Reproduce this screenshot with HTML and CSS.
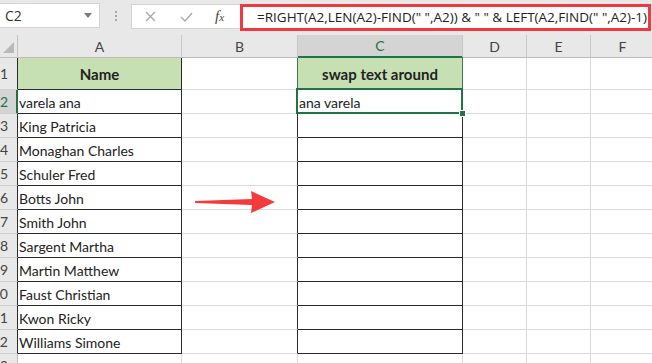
FILE: index.html
```html
<!DOCTYPE html>
<html>
<head>
  <title>Swap text around</title>
  <link rel="stylesheet" href="styles.css">
</head>
<body>
  <div class="toolbar">
    <div class="namebox">
      <span>C2</span>
      <svg class="caret" width="8" height="5" viewBox="0 0 8 5"><path d="M0 0h8L4 5z"/></svg>
    </div>
    <div class="grip"><i></i><i></i><i></i></div>
    <div class="fnbox">
      <svg width="11" height="11" viewBox="0 0 11 11"><path d="M1 1l9 9M10 1l-9 9"/></svg>
      <svg width="13" height="10" viewBox="0 0 13 10"><path d="M1 5l4 4 7-8"/></svg>
      <span class="fx">f<small>x</small></span>
    </div>
    <div class="formula">=RIGHT(A2,LEN(A2)-FIND(" ",A2)) &amp; " " &amp; LEFT(A2,FIND(" ",A2)-1)</div>
  </div>

  <div class="sheet">
    <div class="corner"><svg width="11" height="11" viewBox="0 0 11 11"><path d="M11 0v11H0z"/></svg></div>
    <div class="hd">A</div>
    <div class="hd">B</div>
    <div class="hd on">C</div>
    <div class="hd">D</div>
    <div class="hd">E</div>
    <div class="hd">F</div>

    <div class="rh edge mid">1</div>
    <div class="c box title">Name</div>
    <div class="c green-edge"></div>
    <div class="c box title top">swap text around</div>
    <div class="c"></div><div class="c"></div><div class="c"></div>

    <div class="rh on">2</div>
    <div class="c box">varela ana</div>
    <div class="c edge"></div>
    <div class="c box sel">ana varela</div>
    <div class="c"></div><div class="c"></div><div class="c"></div>

    <div class="rh edge">3</div>
    <div class="c box">King Patricia</div>
    <div class="c edge"></div>
    <div class="c box"></div>
    <div class="c"></div><div class="c"></div><div class="c"></div>

    <div class="rh edge">4</div>
    <div class="c box">Monaghan Charles</div>
    <div class="c edge"></div>
    <div class="c box"></div>
    <div class="c"></div><div class="c"></div><div class="c"></div>

    <div class="rh edge">5</div>
    <div class="c box">Schuler Fred</div>
    <div class="c edge"></div>
    <div class="c box"></div>
    <div class="c"></div><div class="c"></div><div class="c"></div>

    <div class="rh edge">6</div>
    <div class="c box">Botts John</div>
    <div class="c edge"></div>
    <div class="c box"></div>
    <div class="c"></div><div class="c"></div><div class="c"></div>

    <div class="rh edge">7</div>
    <div class="c box">Smith John</div>
    <div class="c edge"></div>
    <div class="c box"></div>
    <div class="c"></div><div class="c"></div><div class="c"></div>

    <div class="rh edge">8</div>
    <div class="c box">Sargent Martha</div>
    <div class="c edge"></div>
    <div class="c box"></div>
    <div class="c"></div><div class="c"></div><div class="c"></div>

    <div class="rh edge">9</div>
    <div class="c box">Martin Matthew</div>
    <div class="c edge"></div>
    <div class="c box"></div>
    <div class="c"></div><div class="c"></div><div class="c"></div>

    <div class="rh edge">10</div>
    <div class="c box">Faust Christian</div>
    <div class="c edge"></div>
    <div class="c box"></div>
    <div class="c"></div><div class="c"></div><div class="c"></div>

    <div class="rh edge">11</div>
    <div class="c box">Kwon Ricky</div>
    <div class="c edge"></div>
    <div class="c box"></div>
    <div class="c"></div><div class="c"></div><div class="c"></div>

    <div class="rh edge">12</div>
    <div class="c box">Williams Simone</div>
    <div class="c edge"></div>
    <div class="c box"></div>
    <div class="c"></div><div class="c"></div><div class="c"></div>

    <div class="rh">13</div>
    <div class="c"></div><div class="c"></div><div class="c"></div>
    <div class="c"></div><div class="c"></div><div class="c"></div>
  </div>

  <svg class="arrow" width="82" height="24" viewBox="0 0 82 24">
    <polygon points="0,11 57,9 56,1 80,12 56,23 57,15 0,13"/>
  </svg>
</body>
</html>
```

FILE: styles.css
```css
body {
  margin: 0;
  width: 652px;
  height: 363px;
  overflow: hidden;
  position: relative;
  background: #fff;
  font-family: Lato, "Open Sans", sans-serif;
  color: #222;
}

/* formula bar */
.toolbar {
  height: 35px;
  background: #e8e8e8;
  display: flex;
  align-items: flex-start;
  padding-top: 3px;
  box-sizing: border-box;
}
.namebox {
  width: 100px;
  height: 25px;
  background: #fff;
  border: 1px solid #d4d4d4;
  border-left: none;
  box-sizing: border-box;
  display: flex;
  align-items: center;
  justify-content: space-between;
  padding: 0 7px 0 5px;
  font-family: "Open Sans", sans-serif;
  font-size: 14px;
  color: #333;
}
.caret {
  fill: #7a7a7a;
}
.grip {
  width: 31px;
  height: 25px;
  display: flex;
  flex-direction: column;
  align-items: center;
  justify-content: center;
  gap: 2px;
}
.grip i {
  width: 2px;
  height: 2px;
  background: #a8a8a8;
}
.fnbox {
  width: 109px;
  height: 25px;
  margin-top: 1px;
  background: #fff;
  border: 1px solid #d4d4d4;
  border-right: none;
  box-sizing: border-box;
  display: flex;
  align-items: center;
  padding-left: 13px;
  gap: 24px;
}
.fnbox svg path {
  fill: none;
  stroke: #a8a8a8;
  stroke-width: 1.3;
}
.fx {
  font-family: "Liberation Serif", serif;
  font-style: italic;
  font-size: 15px;
  color: #444;
  margin-left: -2px;
}
.fx small {
  font-size: 11px;
}
.formula {
  flex: 1;
  height: 27px;
  margin-top: 1px;
  margin-right: 1px;
  border: 3px solid #f0393f;
  box-sizing: border-box;
  background: #fff;
  padding-left: 14px;
  font-family: "Open Sans", sans-serif;
  font-size: 13.5px;
  line-height: 21px;
  color: #222;
  white-space: nowrap;
  overflow: hidden;
}

/* sheet grid */
.sheet {
  display: grid;
  grid-template-columns: 18px 164px 116px 165px 64px 64px 64px;
  grid-template-rows: 23px 32px repeat(12, 24px);
}
.corner {
  background: #e8e8e8;
  border-right: 1px solid #c4c4c4;
  border-bottom: 1px solid #bcbcbc;
  display: flex;
  align-items: flex-end;
  justify-content: flex-end;
  padding: 0 3px 4px 0;
}
.corner svg {
  fill: #b9b9b9;
}
.hd {
  background: #e8e8e8;
  border-right: 1px solid #c8c8c8;
  border-bottom: 1px solid #bcbcbc;
  display: flex;
  align-items: center;
  justify-content: center;
  font-size: 14px;
  color: #444;
}
.hd.on {
  background: #d4d4d4;
  color: #217346;
  border-bottom: 2px solid #217346;
}
.rh {
  background: #e8e8e8;
  border-right: 1px solid #bcbcbc;
  border-bottom: 1px solid #cfcfcf;
  display: flex;
  align-items: flex-end;
  justify-content: flex-end;
  padding: 0 9px 3px 0;
  overflow: hidden;
  font-size: 14px;
  color: #444;
}
.rh.mid {
  align-items: center;
  padding-bottom: 0;
}
.rh.on {
  background: #d4d4d4;
  color: #217346;
  border-right: 2px solid #217346;
  padding-right: 8px;
}
.c {
  border-right: 1px solid #dadada;
  border-bottom: 1px solid #dadada;
  display: flex;
  align-items: flex-end;
  padding: 0 0 2px 1px;
  font-size: 14px;
  white-space: nowrap;
  overflow: hidden;
}
.edge {
  border-right-color: #2a2a2a;
}
.green-edge {
  border-right-color: #3c7a4e;
}
.box {
  border-right-color: #2a2a2a;
  border-bottom-color: #2a2a2a;
}
.title {
  background: #c6e0b4;
  font-size: 15px;
  font-weight: bold;
  align-items: center;
  justify-content: center;
  padding: 0;
}
.title.top {
  border-right-color: #3c7a4e;
  border-bottom-color: #3c7a4e;
}
.sel {
  position: relative;
  overflow: visible;
}
.sel::before {
  content: "";
  position: absolute;
  left: -2px;
  top: -2px;
  right: -1px;
  bottom: -1px;
  border: 2px solid #217346;
}
.sel::after {
  content: "";
  position: absolute;
  right: -4px;
  bottom: -4px;
  width: 5px;
  height: 5px;
  background: #217346;
  border: 1px solid #fff;
}

.arrow {
  position: absolute;
  left: 195px;
  top: 190px;
  fill: #f43b3b;
}
```
